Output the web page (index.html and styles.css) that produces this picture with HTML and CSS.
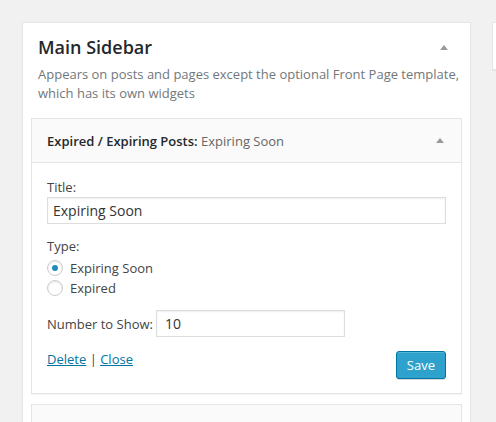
FILE: index.html
```html
<!DOCTYPE html>
<html>
<head>
<meta charset="utf-8">
<link rel="stylesheet" href="styles.css">
</head>
<body>
<div class="page">
  <div class="sidebar">
    <div class="sidebar-name">
      <h2>Main Sidebar</h2>
      <span class="arrow"></span>
    </div>
    <p class="description">Appears on posts and pages except the optional Front Page template, which has its own widgets</p>
    <div class="widgets">
      <div class="widget">
        <div class="widget-top">
          <h3><strong>Expired / Expiring Posts</strong><span class="colon">:</span> <span class="in-title">Expiring Soon</span></h3>
          <span class="arrow small"></span>
        </div>
        <div class="widget-inside">
          <div class="field">
            <label class="lbl">Title:</label>
            <input class="text wide" type="text" value="Expiring Soon">
          </div>
          <div class="field">
            <div class="lbl">Type:</div>
            <div class="radios">
              <label class="radio-row"><span class="radio checked"></span>Expiring Soon</label>
              <label class="radio-row"><span class="radio"></span>Expired</label>
            </div>
          </div>
          <div class="field inline">
            <label class="lbl">Number to Show:</label>
            <input class="text num" type="text" value="10">
          </div>
          <div class="controls">
            <div class="links"><a href="#">Delete</a> | <a href="#">Close</a></div>
            <button class="save">Save</button>
          </div>
        </div>
      </div>
      <div class="widget next"></div>
    </div>
  </div>
  <div class="side-card"></div>
</div>
</body>
</html>
```
FILE: styles.css
```css
html, body {
  margin: 0;
  padding: 0;
  background: #f1f1f1;
  font-family: "Open Sans", sans-serif;
  color: #444;
  font-size: 13px;
}
.page {
  display: flex;
  align-items: flex-start;
  padding: 22px 0 0 22px;
  gap: 21px;
  height: 400px;
  overflow: hidden;
}
.sidebar {
  flex: 0 0 449px;
  box-sizing: border-box;
  background: #fff;
  border: 1px solid #e5e5e5;
  box-shadow: 0 1px 1px rgba(0,0,0,.04);
  height: 420px;
}
.side-card {
  flex: 0 0 40px;
  height: 46px;
  background: #fff;
  border: 1px solid #e5e5e5;
  border-right: none;
  box-shadow: 0 1px 1px rgba(0,0,0,.04);
}
.sidebar-name {
  display: flex;
  align-items: center;
  justify-content: space-between;
  padding: 8px 22px 0 15px;
  height: 32px;
}
.sidebar-name h2 {
  margin: 0;
  font-size: 18px;
  font-weight: 600;
  color: #23282d;
  line-height: 24px;
}
.arrow {
  width: 0;
  height: 0;
  border-left: 4px solid transparent;
  border-right: 4px solid transparent;
  border-bottom: 5px solid #999;
}
.description {
  margin: 0;
  padding: 2px 6px 0 15px;
  color: #72777c;
  font-size: 13px;
  line-height: 19px;
}
.widgets {
  padding: 15px 8px 0 8px;
  display: flex;
  flex-direction: column;
  gap: 10px;
}
.widget {
  background: #fff;
  border: 1px solid #e5e5e5;
  box-shadow: 0 1px 1px rgba(0,0,0,.04);
}
.widget-top {
  display: flex;
  align-items: center;
  justify-content: space-between;
  background: #fafafa;
  border-bottom: 1px solid #e5e5e5;
  height: 43px;
  padding: 0 17px 0 15px;
}
.widget-top h3 {
  margin: 0;
  font-size: 13px;
  font-weight: 400;
  color: #23282d;
  line-height: 18px;
}
.widget-top strong { font-weight: 600; }
.widget-top .colon { font-weight: 600; }
.in-title { color: #666; }
.widget-inside {
  padding: 14px 15px 14px 15px;
}
.field {
  display: flex;
  flex-direction: column;
  margin-bottom: 12px;
}
.lbl {
  color: #444;
  line-height: 20px;
}
.text {
  font-family: "Open Sans", sans-serif;
  font-size: 14px;
  color: #333;
  border: 1px solid #ddd;
  box-shadow: inset 0 1px 2px rgba(0,0,0,.07);
  background: #fff;
  padding: 0 5px;
  margin: 0;
  outline: none;
  box-sizing: border-box;
}
.wide {
  width: 100%;
  height: 27px;
}
.radios {
  padding-top: 2px;
  display: flex;
  flex-direction: column;
}
.radio-row {
  display: flex;
  align-items: center;
  gap: 7px;
  line-height: 20px;
  color: #444;
}
.radio {
  box-sizing: border-box;
  width: 16px;
  height: 16px;
  border-radius: 50%;
  border: 1px solid #ccc;
  box-shadow: inset 0 1px 2px rgba(0,0,0,.1);
  display: flex;
  align-items: center;
  justify-content: center;
}
.radio.checked::after {
  content: "";
  width: 6px;
  height: 6px;
  border-radius: 50%;
  background: #1e8cbe;
}
.field.inline {
  flex-direction: row;
  align-items: center;
  gap: 3px;
}
.num {
  width: 189px;
  height: 27px;
  padding: 0 8px;
}
.controls {
  display: flex;
  justify-content: space-between;
  align-items: flex-start;
  margin-top: -1px;
}
.links { line-height: 22px; color: #444; }
.links a { color: #0074a2; }
.save {
  font-family: "Open Sans", sans-serif;
  font-size: 13px;
  color: #fff;
  background: #2ea2cc;
  border: 1px solid #0074a2;
  border-radius: 3px;
  box-shadow: inset 0 1px 0 rgba(120,200,230,.5), 0 1px 0 rgba(0,0,0,.15);
  height: 28px;
  padding: 0 10px 1px;
  margin-top: 3px;
}
.widget.next {
  background: #fafafa;
  height: 40px;
}
```
